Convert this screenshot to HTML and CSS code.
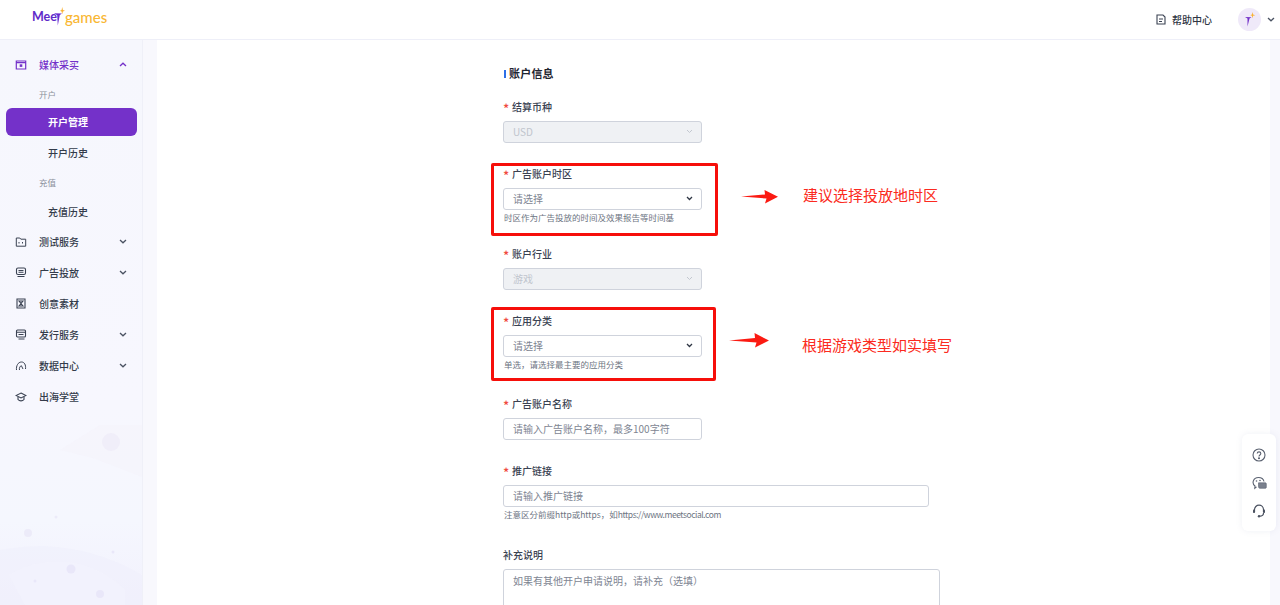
FILE: index.html
```html
<!DOCTYPE html>
<html lang="zh-CN">
<head>
<meta charset="utf-8">
<title>开户管理</title>
<link rel="stylesheet" href="styles.css">
</head>
<body>
<header class="topbar">
  <div class="logo"><span class="logo-meet">Mee</span><svg class="logo-mark" width="11" height="19" viewBox="0 0 11 19"><path d="M0 6.200L8 6.600 5.800 8 3.800 18.500 3.200 8.200z" fill="#6b2bd0"/><path d="M8.200 0l.7 3 2.100.8-2.100.6-.7 2.800-.6-2.800-1.600-.6 1.600-.8z" fill="#f9b233"/></svg><span class="logo-games">games</span></div>
  <div class="top-actions">
    <svg class="help-ico" width="10" height="11" viewBox="0 0 10 11" fill="none" stroke="#3a4252" stroke-width="1.100"><path d="M1 1h6l2 2v7H1z"/><path d="M3 5h4M3 7.500h3"/></svg>
    <span class="help-text">帮助中心</span>
    <div class="avatar"><svg width="12" height="15" viewBox="0 0 12 15"><path d="M1 5L7.500 5.300 5.500 6.500 3.500 14.500 3.500 6.500z" fill="#7431c9"/><path d="M8.500 0l.6 2.500 2.200.7-2.200.6-.6 2.400-.6-2.400-1.600-.6 1.600-.7z" fill="#f9b233"/></svg></div>
    <svg class="top-caret" width="8" height="5" viewBox="0 0 8 5" fill="none" stroke="#4a5262" stroke-width="1.300"><path d="M1 1l3 2.800L7 1"/></svg>
  </div>
</header>
<div class="layout">
  <aside class="sidebar">
    <svg class="side-art" width="142" height="200" viewBox="0 0 142 200">
      <path d="M60 45L93 53 142 72V20H100z" fill="#f3f2fb" fill-opacity=".45"/>
      <path d="M0 145C50 135 100 145 142 170V200H0z" fill="#efeefb" fill-opacity=".55"/>
      <path d="M9 170C40 150 90 150 125 185L125 200H25z" fill="#f3f2fd" fill-opacity=".8"/>
      <circle cx="111" cy="37" r="9" fill="#f0eef9"/><circle cx="28" cy="128" r="4" fill="#ecebf9"/>
      <circle cx="71" cy="164" r="4.500" fill="#e9e7f9"/><circle cx="100" cy="189" r="4" fill="#e9e7f9"/>
      <circle cx="113" cy="147" r="1.500" fill="#e9e7f9"/><circle cx="56" cy="112" r="1.500" fill="#ecebf9"/><circle cx="35" cy="176" r="1.500" fill="#e9e7f9"/>
    </svg>
    <nav class="menu">
      <div class="menu-row is-open">
        <svg class="menu-ico" width="11" height="10" viewBox="0 0 11 10" fill="none" stroke="#7431c9" stroke-width="1.200"><path d="M.8 1h9.400v8H.8zM.8 2.600h9.400"/><rect x="4.200" y="4.300" width="2.600" height="2.600" fill="#7431c9" stroke="none"/></svg>
        <span class="menu-label">媒体采买</span>
        <svg class="chev" width="8" height="5" viewBox="0 0 8 5" fill="none" stroke="#7431c9" stroke-width="1.300"><path d="M1 4l3-2.800L7 4"/></svg>
      </div>
      <div class="group-label first">开户</div>
      <div class="sub-row active">开户管理</div>
      <div class="sub-row second">开户历史</div>
      <div class="group-label">充值</div>
      <div class="sub-row">充值历史</div>
      <div class="menu-row after-sub">
        <svg class="menu-ico" width="11" height="10" viewBox="0 0 11 10" fill="none" stroke="#3a4252" stroke-width="1"><path d="M.8 1h3.500l1 1.200h4.900v7H.8z"/><path d="M3.500 5v1.500M7 5v1.500"/></svg>
        <span class="menu-label">测试服务</span>
        <svg class="chev" width="8" height="5" viewBox="0 0 8 5" fill="none" stroke="#4a5262" stroke-width="1.300"><path d="M1 1l3 2.800L7 1"/></svg>
      </div>
      <div class="menu-row">
        <svg class="menu-ico" width="11" height="11" viewBox="0 0 11 11" fill="none" stroke="#3a4252" stroke-width="1.100"><rect x="1" y="1" width="9" height="6.500" rx="1.500"/><path d="M3 3.500h5M3 5.300h5M2 9.500h7"/></svg>
        <span class="menu-label">广告投放</span>
        <svg class="chev" width="8" height="5" viewBox="0 0 8 5" fill="none" stroke="#4a5262" stroke-width="1.300"><path d="M1 1l3 2.800L7 1"/></svg>
      </div>
      <div class="menu-row">
        <svg class="menu-ico" width="11" height="11" viewBox="0 0 11 11" fill="none" stroke="#3a4252" stroke-width="1.100"><path d="M1.500 1h8v9h-8z"/><path d="M3.500 3h4L5.500 5.500 7.500 8h-4L5.500 5.500z"/></svg>
        <span class="menu-label">创意素材</span>
      </div>
      <div class="menu-row">
        <svg class="menu-ico" width="11" height="11" viewBox="0 0 11 11" fill="none" stroke="#3a4252" stroke-width="1.100"><rect x="1" y="1" width="9" height="7" rx="1"/><path d="M1 3.300h9M3 5.500h5M3 10h6"/></svg>
        <span class="menu-label">发行服务</span>
        <svg class="chev" width="8" height="5" viewBox="0 0 8 5" fill="none" stroke="#4a5262" stroke-width="1.300"><path d="M1 1l3 2.800L7 1"/></svg>
      </div>
      <div class="menu-row">
        <svg class="menu-ico" width="11" height="10" viewBox="0 0 11 10" fill="none" stroke="#3a4252" stroke-width="1"><path d="M1 9C.5 5 2.500 1 6 1c3 0 4.500 3 4 7"/><path d="M4 9c-.5-2 .5-4 2-4.500M6 5l1.500 3"/></svg>
        <span class="menu-label">数据中心</span>
        <svg class="chev" width="8" height="5" viewBox="0 0 8 5" fill="none" stroke="#4a5262" stroke-width="1.300"><path d="M1 1l3 2.800L7 1"/></svg>
      </div>
      <div class="menu-row">
        <svg class="menu-ico" width="12" height="10" viewBox="0 0 12 10" fill="none" stroke="#3a4252" stroke-width="1.100"><path d="M6 1l5 2.500L6 6 1 3.500z"/><path d="M3 5v2.500C4.500 9.300 7.500 9.300 9 7.500V5"/></svg>
        <span class="menu-label">出海学堂</span>
      </div>
    </nav>
  </aside>
  <main class="content">
    <form class="form">
      <h2 class="section-title">账户信息</h2>

      <div class="field">
        <div class="label"><span class="req">*</span>结算币种</div>
        <div class="control short disabled"><span>USD</span><svg width="7" height="5" viewBox="0 0 7 5" fill="none" stroke="#c3c8d0" stroke-width="1"><path d="M1 1l2.500 2.500L6 1"/></svg></div>
      </div>

      <div class="field">
        <div class="label"><span class="req">*</span>广告账户时区</div>
        <div class="control short"><span>请选择</span><svg width="7" height="5" viewBox="0 0 7 5" fill="none" stroke="#2f3644" stroke-width="1.300"><path d="M1 1l2.500 2.500L6 1"/></svg></div>
        <div class="help">时区作为广告投放的时间及效果报告等时间基</div>
      </div>

      <div class="field">
        <div class="label"><span class="req">*</span>账户行业</div>
        <div class="control short disabled"><span>游戏</span><svg width="7" height="5" viewBox="0 0 7 5" fill="none" stroke="#c3c8d0" stroke-width="1"><path d="M1 1l2.500 2.500L6 1"/></svg></div>
      </div>

      <div class="field roomy">
        <div class="label"><span class="req">*</span>应用分类</div>
        <div class="control short"><span>请选择</span><svg width="7" height="5" viewBox="0 0 7 5" fill="none" stroke="#2f3644" stroke-width="1.300"><path d="M1 1l2.500 2.500L6 1"/></svg></div>
        <div class="help">单选，请选择最主要的应用分类</div>
      </div>

      <div class="field">
        <div class="label"><span class="req">*</span>广告账户名称</div>
        <div class="control short"><span>请输入广告账户名称，最多100字符</span></div>
      </div>

      <div class="field roomier">
        <div class="label"><span class="req">*</span>推广链接</div>
        <div class="control wide"><span>请输入推广链接</span></div>
        <div class="help">注意区分前缀http或https，如<span class="help-url">https://www.meetsocial.com</span></div>
      </div>

      <div class="field">
        <div class="label plain">补充说明</div>
        <div class="textarea"><span>如果有其他开户申请说明，请补充（选填）</span></div>
      </div>

      <div class="note-box box-one"></div>
      <div class="note-box box-two"></div>
      <svg class="arrow arrow-one" width="38" height="14" viewBox="0 0 38 14"><path d="M0 6.500L24 4.500 23.500 0 37 6.800 24 13.500 25.500 8.500z" fill="#fb1a12"/></svg>
      <svg class="arrow arrow-two" width="41" height="15" viewBox="0 0 41 15"><path d="M0 7.500L26 5 25.500 0 40 7.500 26 14.500 27.500 9.500z" fill="#fb1a12"/></svg>
      <div class="note-text text-one">建议选择投放地时区</div>
      <div class="note-text text-two">根据游戏类型如实填写</div>
    </form>
  </main>
  <div class="float-tools">
    <svg width="14" height="14" viewBox="0 0 14 14" fill="none" stroke="#5a6170" stroke-width="1.100"><circle cx="7" cy="7" r="6"/><path d="M5.200 5.500C5.300 3.300 8.800 3.300 8.800 5.500c0 1.500-1.800 1.500-1.800 3"/><circle cx="7" cy="10.300" r=".5" fill="#5a6170"/></svg>
    <svg width="15" height="14" viewBox="0 0 15 14" fill="none" stroke="#5a6170" stroke-width="1.100"><path d="M4.500 10.800L2.800 12.300 3 10C-.5 7.500 1 1.500 6.500 1.500c3 0 5 1.700 5.500 4"/><path d="M6.500 6.800h6.800c.6 0 1 .4 1 1v3.500c0 .6-.4 1-1 1H8c-.8 0-1.500-.6-1.500-1.500z" fill="#7a808d" stroke="#5a6170" stroke-width=".6"/><circle cx="4.500" cy="5" r=".8" fill="#5a6170" stroke="none"/><circle cx="8" cy="4.500" r=".8" fill="#5a6170" stroke="none"/></svg>
    <svg width="14" height="14" viewBox="0 0 14 14" fill="none" stroke="#4a5160" stroke-width="1.200"><path d="M2.500 8V5.700a4.500 4.500 0 0 1 9 0V8"/><path d="M11.500 9c0 2-1.500 3.200-4 3.200"/><rect x="1" y="5.500" width="2" height="3.500" rx=".8" fill="#4a5160" stroke="none"/><rect x="11" y="5.500" width="2" height="3.500" rx=".8" fill="#4a5160" stroke="none"/><circle cx="7" cy="12.200" r="1.200" fill="#4a5160" stroke="none"/></svg>
  </div>
</div>
</body>
</html>
```
FILE: styles.css
```css
* { box-sizing: border-box; }
html, body { margin: 0; height: 605px; overflow: hidden; }
body {
  font-family: "Noto Sans CJK SC", "Noto Sans", sans-serif;
  font-size: 10px;
  color: #333b4a;
  background: #f8f8fd;
}
.topbar {
  height: 40px;
  background: #fff;
  border-bottom: 1px solid #eeeff8;
  display: flex;
  align-items: center;
  justify-content: space-between;
  padding: 0 5px 0 32px;
}
.logo { display: flex; align-items: center; height: 34px; margin-top: -6px; font-family: "Lato", sans-serif; font-size: 12.500px; font-weight: 500; }
.logo-meet { color: #5f2bc9; font-weight: 700; }
.logo-mark { margin-left: -3px; }
.logo-games { color: #f9b733; font-size: 15px; }
.top-actions { display: flex; align-items: center; }
.help-ico { margin-right: 6px; }
.help-text { color: #2f3644; font-size: 10px; font-weight: 500; margin-right: 26px; }
.avatar { width: 23px; height: 23px; border-radius: 50%; background: #efe9f9; display: flex; align-items: center; justify-content: center; margin-right: 6px; }
.top-caret { display: block; }
.layout { display: flex; height: 565px; position: relative; }
.sidebar {
  width: 143px;
  flex: none;
  position: relative;
  background: linear-gradient(180deg, #f6f7fd 0%, #f7f7fe 65%, #f5f7fe 85%, #f2f1fd 100%);
  border-right: 1px solid #eff0f8;
  overflow: hidden;
}
.side-art { position: absolute; left: 0; bottom: 0; }
.menu { position: relative; padding-top: 9px; }
.menu-row {
  height: 31px;
  display: flex;
  align-items: center;
  padding: 0 15px;
  font-weight: 500;
  color: #333b4a;
}
.menu-row.after-sub { margin-top: 1px; }
.menu-ico { width: 12px; flex: none; margin-right: 12px; }
.menu-label { flex: 1; }
.chev { flex: none; }
.is-open { color: #7431c9; }
.group-label { height: 31px; padding-left: 39px; font-size: 8.500px; color: #8b909b; display: flex; align-items: center; }
.group-label.first { height: 28px; }
.sub-row {
  height: 28px;
  margin-left: 6px;
  width: 131px;
  padding-left: 42px;
  display: flex;
  align-items: center;
  font-weight: 500;
  color: #333b4a;
  border-radius: 6px;
}
.sub-row.second { margin-top: 2px; }
.sub-row.active { background: #7431c9; color: #fff; font-weight: 700; padding-bottom: 1px; }
.content {
  flex: none;
  width: 1113px;
  margin-left: 14px;
  background: #fff;
  overflow: hidden;
  height: 565px;
}
.form { position: relative; margin-left: 346px; width: 500px; padding-top: 24px; }
.section-title {
  margin: 0 0 18px;
  font-size: 11px;
  line-height: 18px;
  font-weight: 700;
  letter-spacing: .2px;
  color: #1f2530;
  padding-left: 6px;
  position: relative;
}
.section-title::before { content: ""; position: absolute; left: 1px; top: 6px; width: 2px; height: 8px; background: #2d6fe8; }
.field { margin-bottom: 24px; }
.field.roomy { margin-bottom: 27px; }
.field.roomier { margin-bottom: 28px; }
.label { height: 14px; line-height: 14px; font-size: 10px; font-weight: 500; color: #3a4252; margin-bottom: 7px; }
.label.plain { color: #3a4252; }
.req { color: #f04a3e; display: inline-block; width: 9px; font-size: 13px; vertical-align: -3px; line-height: 10px; }
.control {
  height: 22px;
  background: #fff;
  border: 1px solid #cfd3dc;
  border-radius: 3px;
  display: flex;
  align-items: center;
  justify-content: space-between;
  padding: 0 8px 1px 9px;
  color: #7e8592;
  font-size: 10px;
}
.control.short { width: 199px; }
.control.wide { width: 426px; }
.control.disabled { background: #eff1f4; color: #c0c5cd; }
.help { font-size: 8.500px; line-height: 12px; color: #6d7482; margin-top: 1px; padding-left: 1px; }
.help-url { letter-spacing: -.45px; }
.textarea {
  width: 437px;
  height: 60px;
  border: 1px solid #cfd3dc;
  border-radius: 3px;
  padding: 3px 9px;
  color: #7e8592;
  line-height: 16px;
}
.note-box { position: absolute; border: 3px solid #f60f0a; border-radius: 2px; }
.box-one { left: -12px; top: 123px; width: 227px; height: 73px; }
.box-two { left: -12px; top: 267px; width: 225px; height: 74px; }
.arrow { position: absolute; }
.arrow-one { left: 238px; top: 150px; }
.arrow-two { left: 226px; top: 293px; }
.note-text { position: absolute; color: #fb2a20; font-size: 15px; line-height: 20px; white-space: nowrap; }
.text-one { left: 300px; top: 145px; }
.text-two { left: 299px; top: 295px; }
.float-tools {
  position: absolute;
  right: 4px;
  top: 394px;
  width: 34px;
  height: 97px;
  background: #fff;
  border-radius: 6px;
  box-shadow: 0 0 6px rgba(120, 130, 170, .12);
  display: flex;
  flex-direction: column;
  align-items: center;
  justify-content: center;
  gap: 14px;
}
```
